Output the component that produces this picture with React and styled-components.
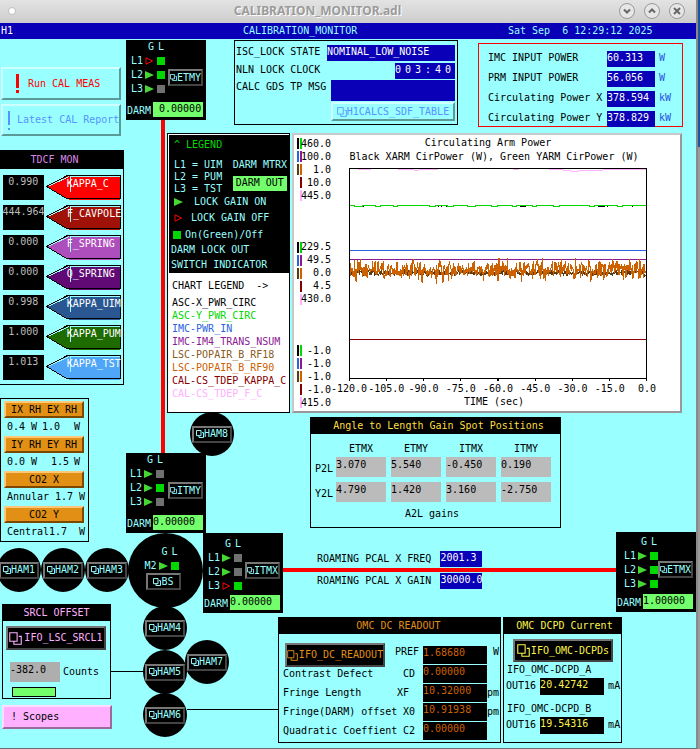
import React from 'react';
import styled, { createGlobalStyle, css } from 'styled-components';

const CYAN = '#99ffff';
const NAVY = '#0a00b8';
const LIME = '#73ff6b';
const GREEN = '#00d800';
const AMBER = '#e19015';

const GlobalStyle = createGlobalStyle`
  * {
    box-sizing: border-box;
  }
  body {
    margin: 0;
    padding-right: 2px;
    background: linear-gradient(#1b559b 147px, #9a9a9a 147px);
    font-family: 'DejaVu Sans Mono', 'Liberation Mono', monospace;
    font-size: 10px;
    line-height: 12px;
    color: #000;
    white-space: pre;
  }
  button, input {
    font: inherit;
    color: inherit;
    margin: 0;
    padding: 0;
    border-radius: 0;
  }
`;

const Window = styled.div`
  border-right: 2px solid #8a8a8a;
  border-bottom: 1px solid #6e6e6e;
  background: ${CYAN};
`;

const TitleBar = styled.header`
  position: relative;
  display: flex;
  align-items: center;
  height: 23px;
  padding: 0 11px 2px 8px;
  background: linear-gradient(#e3e3e3, #cdcdcd);
`;

const WindowTitle = styled.h1`
  flex: 1;
  margin: 0;
  text-align: center;
  font: bold 12px/20px 'Noto Sans', 'Open Sans', sans-serif;
  color: #9b9b9b;
  text-shadow: 1px 1px 0 #fff;
`;

const Dot = styled.span`
  width: 8px;
  height: 8px;
  border: 1px solid #bdbdbd;
  border-radius: 50%;
  background: #fff;
`;

const WindowButtons = styled.div`
  display: flex;
  gap: 9px;
`;

const WindowButton = styled.button`
  display: flex;
  align-items: center;
  justify-content: center;
  width: 16px;
  height: 16px;
  border: 1px solid #989898;
  border-radius: 50%;
  background: #e6e6e6;
`;

const Banner = styled.div`
  display: grid;
  grid-template-columns: 242fr 265fr 188fr;
  align-items: center;
  height: 16px;
  padding-left: 1px;
  background: ${NAVY};
  color: ${CYAN};
`;

const White = styled.span`
  color: #fff;
`;

const Canvas = styled.main`
  position: relative;
  display: flex;
  padding-bottom: 5px;
`;

const LeftColumn = styled.div`
  display: flex;
  flex-direction: column;
  align-items: flex-start;
  width: 124px;
  padding-top: 28px;
`;

const RightColumn = styled.div`
  flex: 1;
  min-width: 0;
  margin-left: 43px;
`;

const raised = css`
  border-style: solid;
  border-width: 2px;
`;

const ShellButton = styled.button`
  ${raised}
  display: flex;
  align-items: center;
  gap: ${(p) => p.$gap || 8}px;
  width: ${(p) => p.$width || 120}px;
  height: ${(p) => p.$height || 33}px;
  margin: 0 0 4px ${(p) => p.$indent || 1}px;
  padding-left: ${(p) => p.$pad || 5}px;
  overflow: hidden;
  background: ${(p) => p.$bg || CYAN};
  border-color: ${(p) => (p.$bg ? '#ffdcff #9a6a9a #9a6a9a #ffdcff' : '#cfffff #5c9999 #5c9999 #cfffff')};
  color: ${(p) => p.$color};
`;

const Panel = styled.section`
  border: 1px solid ${(p) => p.$border || '#000'};
`;

const PanelTitle = styled.h2`
  margin: 0;
  height: ${(p) => p.$height || 16}px;
  background: #000;
  color: ${(p) => p.$color};
  font: inherit;
  line-height: ${(p) => p.$height || 16}px;
  text-align: center;
  text-indent: ${(p) => p.$shift || 0}px;
`;

const TdcfPanel = styled(Panel)`
  width: 124px;
  margin-top: 10px;
  border-left: 0;
`;

const TdcfRows = styled.div`
  display: flex;
  flex-direction: column;
  gap: 5px;
  padding: 6px 2px 4px 3px;
`;

const TdcfRow = styled.div`
  display: flex;
  gap: 2px;
  height: 25px;
`;

const TdcfValue = styled.output`
  display: flex;
  justify-content: center;
  width: 41px;
  height: 25px;
  background: #000;
  color: #bbb;
  line-height: 14px;
`;

const Tag = styled.div`
  position: relative;
  width: 76px;
  height: 25px;
  color: #fff;
`;

const TagShape = styled.svg`
  position: absolute;
  inset: 0;
`;

const TagLabel = styled.span`
  position: relative;
  display: block;
  padding: 3px 0 0 21px;
`;

const HeaterPanel = styled(Panel)`
  width: 89px;
  margin-top: 13px;
  padding: 2px 4px 0 3px;
`;

const HeaterButton = styled.button`
  ${raised}
  display: block;
  width: 80px;
  height: 17px;
  background: ${AMBER};
  border-color: #ffc878 #7a4800 #7a4800 #ffc878;
  line-height: 12px;
`;

const HeaterRow = styled.div`
  display: grid;
  grid-template-columns: ${(p) => p.$columns};
  align-items: center;
  height: 18px;
  padding-left: 3px;
`;

const SrclPanel = styled(Panel)`
  width: 109px;
  margin: 62px 0 6px 2px;
  padding-bottom: 1px;
`;

const SrclBody = styled.div`
  padding: 5px 3px 0;
`;

const SrclRow = styled.label`
  display: flex;
  align-items: center;
  gap: 3px;
  padding: 12px 0 5px 4px;
`;

const Entry = styled.input`
  display: block;
  width: 50px;
  height: 20px;
  padding-bottom: 6px;
  border: 0;
  background: ${(p) => p.$bg || '#bbb'};
`;

const StatusLamp = styled.div`
  width: 44px;
  height: 10px;
  margin-left: 6px;
  border: 1px solid #000;
  background: ${LIME};
`;

const DisplayButton = styled.button`
  ${raised}
  display: flex;
  align-items: center;
  justify-content: center;
  gap: ${(p) => p.$gap || 0}px;
  width: ${(p) => p.$width || 35}px;
  height: ${(p) => p.$height || 17}px;
  background: #000;
  border-color: #777 #444 #444 #777;
  color: ${(p) => p.$color || CYAN};
`;

const TopRow = styled.div`
  display: flex;
  align-items: flex-start;
  gap: 20px;
  padding: 1px 0 6px 67px;
`;

const StatusPanel = styled(Panel)`
  width: 224px;
  height: 85px;
  padding: 4px 2px 0 1px;
`;

const StatusRow = styled.div`
  display: flex;
  justify-content: space-between;
  height: ${(p) => p.$height || 18}px;
  line-height: 14px;
`;

const Readout = styled.output`
  display: block;
  width: ${(p) => p.$width}px;
  height: ${(p) => p.$height || 16}px;
  background: ${(p) => p.$bg || NAVY};
  color: ${(p) => p.$color || '#fff'};
  line-height: 14px;
`;

const Clock = styled(Readout)`
  display: flex;
  justify-content: space-between;
  padding-right: 4px;
`;

const SdfButton = styled(DisplayButton)`
  margin: 1px 0 0 auto;
  background: ${CYAN};
  border-color: #cfffff #5c9999 #5c9999 #cfffff;
`;

const PowerPanel = styled(Panel)`
  width: 205px;
  height: 84px;
  margin-top: 3px;
  padding: 7px 0 0 9px;
`;

const PowerRow = styled.div`
  display: grid;
  grid-template-columns: 119px 52px 1fr;
  height: 20px;
  line-height: 14px;
`;

const Unit = styled.span`
  color: #2a50e0;
`;

const ChartRow = styled.div`
  display: flex;
  gap: 2px;
  margin-right: 14px;
`;

const Legend = styled.section`
  display: flex;
  flex-direction: column;
  width: 123px;
  border: 1px solid #000;
  background: #fff;
`;

const LegendKey = styled.div`
  margin: 1px 0 0 1px;
  padding: 3px 1px 0 2px;
  background: #000;
  color: ${CYAN};
`;

const LegendLine = styled.div`
  display: flex;
  align-items: center;
  gap: ${(p) => p.$gap || 0}px;
  height: ${(p) => p.$height || 14}px;
  padding-left: ${(p) => p.$indent || 0}px;
  color: ${(p) => p.$color};
`;

const LegendMatrix = styled.div`
  display: flex;
  justify-content: space-between;
  padding: 7px 1px 0 3px;
`;

const DarmOut = styled.div`
  width: 54px;
  height: 15px;
  margin-top: 5px;
  background: ${LIME};
  color: #000;
  text-align: center;
  line-height: 14px;
`;

const LegendSeries = styled.div`
  padding: 3px 0 0 4px;
`;

const Chart = styled.section`
  flex: 1;
  display: flex;
  min-width: 0;
  height: 280px;
  padding: 2px 2px 2px 3px;
  background: #fff;
  border: 2px solid;
  border-color: #c8c8c8 #989898 #989898 #c8c8c8;
`;

const ScaleColumn = styled.div`
  display: flex;
  flex-direction: column;
  justify-content: space-between;
  width: 34px;
`;

const ScaleRow = styled.div`
  display: flex;
  align-items: center;
  height: 13px;
`;

const ScaleMark = styled.i`
  width: 2px;
  height: 11px;
  margin-right: 1px;
  background: ${(p) => p.$color};
`;

const ScaleText = styled.span`
  flex: 1;
  margin-left: -4px;
  text-align: right;
`;

const PlotColumn = styled.div`
  flex: 1;
  min-width: 0;
  padding-right: 13px;
`;

const PlotTitle = styled.div`
  height: 14px;
  padding-right: ${(p) => p.$shift || 0}px;
  text-align: center;
`;

const PlotArea = styled.svg`
  display: block;
  width: calc(100% - 36px);
  height: 214px;
  margin: 3px 18px 0;
`;

const TickRow = styled.div`
  display: flex;
  justify-content: space-between;
  padding: 1px 0;
`;

const TickLabel = styled.span`
  width: 36px;
  text-align: center;
`;

const GainPanel = styled(Panel)`
  width: 251px;
  height: 111px;
  margin: 4px 0 23px 143px;
`;

const GainTable = styled.table`
  margin: 9px 0 0 1px;
  border-collapse: collapse;

  th {
    font-weight: normal;
    padding: 0 3px 2px;
  }
  thead th {
    padding-right: 8px;
  }
  td {
    padding: 0 5px 5px 0;
  }
`;

const GainCaption = styled.div`
  margin-top: 1px;
  padding-right: 7px;
  text-align: center;
`;

const PcalRow = styled.div`
  display: flex;
  gap: 9px;
  height: 16px;
  margin: 0 0 6px 150px;
  line-height: 16px;
`;

const BottomRow = styled.div`
  display: flex;
  gap: 2px;
  margin: 28px 0 0 111px;
`;

const OmcPanel = styled(Panel)`
  width: 223px;
  height: 126px;
`;

const OmcGrid = styled.div`
  display: grid;
  grid-template-columns: 108px 32px 64px 1fr;
  grid-template-rows: 21px repeat(4, 18px);
  row-gap: 1px;
  margin: 9px 0 0 4px;
  line-height: 18px;

  > button {
    margin-left: 2px;
    line-height: 12px;
  }
  > output {
    align-self: end;
  }
`;

const Right = styled.span`
  padding-right: ${(p) => p.$pad || 0}px;
  text-align: right;
`;

const DcpdPanel = styled(Panel)`
  width: 119px;
  height: 126px;

  > button {
    margin: 5px auto 2px 9px;
  }
`;

const DcpdLabel = styled.div`
  padding: 0 0 2px 3px;
`;

const DcpdRow = styled.div`
  display: flex;
  gap: 4px;
  margin: 0 0 8px 2px;
  line-height: 15px;
`;

/* beam path: lines, optics and chambers placed on the canvas */
const Beam = styled.div`
  position: absolute;
  left: ${(p) => p.$x}px;
  top: ${(p) => p.$y}px;
  ${(p) => (p.$right ? `right: ${p.$right}px;` : `width: ${p.$w}px;`)}
  height: ${(p) => p.$h}px;
  background: ${(p) => p.$color || '#f00'};
`;

const OpticBox = styled.div`
  position: absolute;
  top: ${(p) => p.$y}px;
  ${(p) => (p.$x === undefined ? 'right: 0;' : `left: ${p.$x}px;`)}
  display: flex;
  flex-direction: column;
  justify-content: space-between;
  width: 80px;
  height: 80px;
  padding: ${(p) => p.$drop || 0}px 3px 3px 1px;
  background: #000;
  color: ${CYAN};
`;

const OpticTop = styled.div`
  display: flex;
  justify-content: space-between;
  padding-left: ${(p) => p.$indent}px;

  > button {
    margin-top: ${(p) => p.$offset}px;
  }
`;

const Ports = styled.div`
  display: grid;
  grid-template-columns: 14px 12px 8px;
  grid-auto-rows: 14px;
  align-items: center;
`;

const PortHead = styled.span`
  text-align: center;
`;

const Square = styled.i`
  width: 8px;
  height: 8px;
  background: ${(p) => (p.$on ? GREEN : '#707070')};
`;

const DarmRow = styled.div`
  display: flex;
  justify-content: space-between;
  align-items: flex-end;
`;

const Chamber = styled.div`
  position: absolute;
  left: ${(p) => p.$x}px;
  top: ${(p) => p.$y}px;
  display: flex;
  flex-direction: column;
  align-items: center;
  justify-content: center;
  width: 44px;
  height: 44px;
  border-radius: 50%;
  background: #000;
  color: ${CYAN};
`;

const Splitter = styled(Chamber)`
  width: 75px;
  height: 75px;
  padding: 0 4px 6px 0;

  > ${Ports} {
    margin-right: 4px;
  }
`;

const PagesIcon = ({ size = 8 }) => (
  <svg width={size} height={size} viewBox="0 0 12 12" fill="none" stroke="currentColor" strokeWidth={size > 8 ? 1 : 1.5} style={{ flex: 'none' }}>
    <path d="M0.7 0.7H7.5V8.5H0.7ZM9 4H11.3V11.3H4.5V8.5" />
  </svg>
);

const Arrow = ({ open }) => (
  <svg width="9" height="8" viewBox="0 0 9 8">
    {open ? (
      <path d="M1 0.8L7.5 4L1 7.2Z" fill="none" stroke="#f00" />
    ) : (
      <path d="M0 0L9 4L0 8Z" fill="#46d832" />
    )}
  </svg>
);

const Bang = ({ bold }) => (
  <svg width={bold ? 4 : 3} height="19" viewBox={bold ? '0 0 4 19' : '0 0 3 19'} fill="currentColor" style={{ flex: 'none' }}>
    {bold ? <path d="M0 0H3V14H0ZM0 16H3V19H0Z" /> : <path d="M0 0H2V14H0ZM0 17H2V19H0Z" />}
  </svg>
);

const TDCF = [
  ['0.990', 'KAPPA_C', '#ff0000'],
  ['444.964', 'F_CAVPOLE', '#a01208'],
  ['0.000', 'F_SPRING', '#ae4ebc'],
  ['0.000', 'Q_SPRING', '#610a75'],
  ['0.998', 'KAPPA_UIM', '#2a5791'],
  ['1.000', 'KAPPA_PUM', '#1e6b00'],
  ['1.013', 'KAPPA_TST', '#4fa5f8'],
];

const HEATERS = [
  ['IX RH EX RH', ['0.4', 'W', '1.0', 'W'], '24px 11px 32px 1fr'],
  ['IY RH EY RH', ['0.0', 'W', '1.5', 'W'], '24px 20px 23px 1fr'],
  ['CO2 X', ['Annular', '1.7', 'W'], '48px 24px 1fr'],
  ['CO2 Y', ['Central', '1.7', 'W'], '42px 30px 1fr'],
];

const POWERS = [
  ['IMC INPUT POWER', '60.313', 'W'],
  ['PRM INPUT POWER', '56.056', 'W'],
  ['Circulating Power X', '378.594', 'kW'],
  ['Circulating Power Y', '378.829', 'kW'],
];

const SERIES = [
  ['ASC-X_PWR_CIRC', '#000'],
  ['ASC-Y_PWR_CIRC', '#00d800'],
  ['IMC-PWR_IN', '#2a63e4'],
  ['IMC-IM4_TRANS_NSUM', '#8b1a96'],
  ['LSC-POPAIR_B_RF18', '#8a5a20'],
  ['LSC-POPAIR_B_RF90', '#cd6100'],
  ['CAL-CS_TDEP_KAPPA_C', '#870000'],
  ['CAL-CS_TDEP_F_C', '#ffb0ff'],
];

const MARKS = [
  ['#000', '#00d800'],
  ['#2a63e4', '#8b1a96'],
  ['#5e3a10', '#cd6100'],
  ['transparent', '#870000'],
  ['transparent', '#ffb0ff'],
];

const SCALES = [
  ['460.0', '100.0', '1.0', '10.0', '445.0'],
  ['229.5', '49.5', '0.0', '4.5', '430.0'],
  ['-1.0', '-1.0', '-1.0', '-1.0', '415.0'],
];

const TICKS = ['-120.0', '-105.0', '-90.0', '-75.0', '-60.0', '-45.0', '-30.0', '-15.0', '0.0'];

const MIRRORS = ['ETMX', 'ETMY', 'ITMX', 'ITMY'];

const GAINS = [
  ['P2L', '3.070', '5.540', '-0.450', '0.190'],
  ['Y2L', '4.790', '1.420', '3.160', '-2.750'],
];

const OMC = [
  ['Contrast Defect', 'CD', '0.00000', ''],
  ['Fringe Length', 'XF', '10.32000', 'pm'],
  ['Fringe(DARM) offset', 'X0', '10.91938', 'pm'],
  ['Quadratic Coeffient', 'C2', '0.00000', ''],
];

const OPTICS = [
  { name: 'ETMY', x: 126, y: 1, gains: [0, 1, 1], locks: [1, 1, 0], darm: ' 0.00000' },
  { name: 'ITMY', x: 126, y: 414, indent: 3, gains: [1, 1, 1], locks: [0, 1, 0], darm: '0.00000' },
  { name: 'ITMX', x: 203, y: 494, drop: 4, gains: [1, 1, 0], locks: [0, 0, 1], darm: '0.00000' },
  { name: 'ETMX', y: 493, drop: 3, indent: 7, gains: [1, 1, 1], locks: [1, 1, 1], darm: '1.00000' },
];

const CHAMBERS = [
  ['HAM1', -3, 509],
  ['HAM2', 41, 509],
  ['HAM3', 85, 509],
  ['HAM8', 190, 373],
  ['HAM4', 143, 567],
  ['HAM5', 143, 611],
  ['HAM6', 143, 654],
  ['HAM7', 185, 601],
];

const noise = (seed, center, spread) => {
  let s = seed;
  const next = () => {
    s = (s * 48271) % 2147483647;
    return s / 2147483647;
  };
  const points = [];
  for (let x = 1; x < 296; x += 0.5) {
    const y = center + (next() + next() + next() - 1.5) * spread;
    points.push(`${x},${y.toFixed(1)}`);
  }
  return points.join(' ');
};

const Plot = () => (
  <PlotArea viewBox="0 0 297 214" preserveAspectRatio="none" shapeRendering="crispEdges" fill="none">
    <path d="M9 1.5H22M49 1.5H65M65 2.5H70M70 1.5H89M163 1.5H169M199 1.5H213M213 2.5H221M221 3.5H229M229 2.5H253M253 1.5H296" stroke="#ffb0ff" />
    <path d="M14 38.5H15M44 38.5H46M81 38.5H84M89 38.5H90M92 38.5H93M97 38.5H98M163 38.5H167M170 38.5H176M204 38.5H205M248 38.5H255M257 38.5H258M282 38.5H283" stroke="#000" />
    <path d="M1 37.5H5V38.5H13V37.5H26V38.5H31V37.5H44V38.5H48V37.5H80V38.5H86V37.5H98V38.5H104V37.5H118V38.5H126V37.5H142V38.5H148V37.5H163V38.5H167V37.5H183V38.5H187V37.5H204V38.5H210V37.5H240V38.5H245V37.5H268V38.5H273V37.5H296" stroke="#00d800" />
    <path d="M1 82.5H296" stroke="#2a63e4" />
    <path d="M1 91.5H296" stroke="#8b1a96" />
    <polyline points={noise(7, 105, 3)} stroke="#5e3a10" />
    <polyline points={noise(42, 102, 10)} stroke="#cd6100" />
    <path d="M1 171.5H296" stroke="#870000" />
    <path d="M0.5 0.5H296.5V210.5H0.5Z" stroke="#000" />
    {TICKS.map((t, i) => (
      <path key={t} d={`M${i * 37 + 0.5} 210V213`} stroke="#000" />
    ))}
  </PlotArea>
);

const Optic = ({ name, x, y, drop = 0, indent = 4, gains, locks, darm }) => (
  <OpticBox $x={x} $y={y} $drop={drop}>
    <OpticTop $offset={29 - drop} $indent={indent}>
      <Ports>
        <span />
        <PortHead>G</PortHead>
        <PortHead>L</PortHead>
        {gains.map((g, i) => (
          <React.Fragment key={i}>
            <span>L{i + 1}</span>
            <Arrow open={!g} />
            <Square $on={locks[i]} />
          </React.Fragment>
        ))}
      </Ports>
      <DisplayButton>
        <PagesIcon size={7} />
        {name}
      </DisplayButton>
    </OpticTop>
    <DarmRow>
      <span>DARM</span>
      <Readout $width={50} $height={15} $bg={LIME} $color="#000">{darm}</Readout>
    </DarmRow>
  </OpticBox>
);

const App = () => (
  <>
    <GlobalStyle />
    <Window>
      <TitleBar>
        <Dot />
        <WindowTitle>CALIBRATION_MONITOR.adl</WindowTitle>
        <WindowButtons>
          {['M1 2.5L4 5.5L7 2.5', 'M1 5.5L4 2.5L7 5.5', 'M1 1L7 7M7 1L1 7'].map((d, i) => (
            <WindowButton key={d} aria-label={['Minimize', 'Maximize', 'Close'][i]}>
              <svg width="8" height="8" viewBox="0 0 8 8" fill="none" stroke="#666" strokeWidth="2" style={{ flex: 'none' }}>
                <path d={d} />
              </svg>
            </WindowButton>
          ))}
        </WindowButtons>
      </TitleBar>
      <Banner>
        <White>H1</White>
        <span>CALIBRATION_MONITOR</span>
        <span>Sat Sep  6 12:29:12 2025</span>
      </Banner>

      <Canvas>
        <LeftColumn>
          <ShellButton $color="#f00" $pad={13} $gap={8}>
            <Bang bold />
            Run CAL MEAS
          </ShellButton>
          <ShellButton $color="#5893ff" $pad={5} $gap={6} $height={32}>
            <Bang />
            Latest CAL Report
          </ShellButton>

          <TdcfPanel>
            <PanelTitle $height={18} $color="#d687e6" $shift={-14}>TDCF MON</PanelTitle>
            <TdcfRows>
              {TDCF.map(([value, name, color]) => (
                <TdcfRow key={name}>
                  <TdcfValue>{value}</TdcfValue>
                  <Tag>
                    <TagShape width="76" height="25" viewBox="0 0 76 25" shapeRendering="crispEdges">
                      <path d="M1 12L22 1H74V25H24L21 23Z" fill={color} />
                      <path d="M0.5 11.5L21.5 0.5H74.5V23.5H20.5Z" fill="none" stroke="#000" />
                      <path d="M24.5 17V1.5H74M3 11L23 1.5" fill="none" stroke={CYAN} />
                    </TagShape>
                    <TagLabel>{name}</TagLabel>
                  </Tag>
                </TdcfRow>
              ))}
            </TdcfRows>
          </TdcfPanel>

          <HeaterPanel>
            {HEATERS.map(([name, cells, columns]) => (
              <React.Fragment key={name}>
                <HeaterButton>{name}</HeaterButton>
                <HeaterRow $columns={columns}>
                  {cells.map((cell, i) => (
                    <span key={i}>{cell}</span>
                  ))}
                </HeaterRow>
              </React.Fragment>
            ))}
          </HeaterPanel>

          <SrclPanel>
            <PanelTitle $color="#ffb0ff">SRCL OFFSET</PanelTitle>
            <SrclBody>
              <DisplayButton $width={100} $height={24} $gap={2} $color="#ffb0ff">
                <PagesIcon size={13} />
                IFO_LSC_SRCL1
              </DisplayButton>
              <SrclRow>
                <Entry $bg="#aeaeae" defaultValue="-382.0" />
                Counts
              </SrclRow>
              <StatusLamp />
            </SrclBody>
          </SrclPanel>
          <ShellButton $bg="#ffb0ff" $width={110} $height={24} $indent={2} $pad={7}>! Scopes</ShellButton>
        </LeftColumn>

        <RightColumn>
          <TopRow>
            <StatusPanel>
              <StatusRow>
                <span>ISC_LOCK STATE</span>
                <Readout $width={128}>NOMINAL_LOW_NOISE</Readout>
              </StatusRow>
              <StatusRow $height={17}>
                <span>NLN LOCK CLOCK</span>
                <Clock $width={60}>
                  {'003:40'.split('').map((c, i) => (
                    <span key={i}>{c}</span>
                  ))}
                </Clock>
              </StatusRow>
              <StatusRow $height={21}>
                <span>CALC GDS TP MSG</span>
                <Readout $width={124} $height={21} />
              </StatusRow>
              <SdfButton $width={124} $height={19} $color="#5893ff">
                <PagesIcon size={10} />
                H1CALCS_SDF_TABLE
              </SdfButton>
            </StatusPanel>

            <PowerPanel $border="#f00">
              {POWERS.map(([label, value, unit]) => (
                <PowerRow key={label}>
                  <span>{label}</span>
                  <Readout $width={48}>{value}</Readout>
                  <Unit>{unit}</Unit>
                </PowerRow>
              ))}
            </PowerPanel>
          </TopRow>

          <ChartRow>
            <Legend>
              <LegendKey>
                <LegendLine $indent={3} $color={GREEN}>^ LEGEND</LegendLine>
                <LegendMatrix>
                  <div>
                    <div>L1 = UIM</div>
                    <div>L2 = PUM</div>
                    <div>L3 = TST</div>
                  </div>
                  <div>
                    <div>DARM MTRX</div>
                    <DarmOut>DARM OUT</DarmOut>
                  </div>
                </LegendMatrix>
                <LegendLine $indent={3} $gap={11}>
                  <Arrow />
                  LOCK GAIN ON
                </LegendLine>
                <LegendLine $indent={3} $gap={8} $height={17}>
                  <Arrow open />
                  LOCK GAIN OFF
                </LegendLine>
                <LegendLine $indent={2} $gap={4} $height={18}>
                  <Square $on />
                  On(Green)/Off
                </LegendLine>
                <LegendLine $height={12}>DARM LOCK OUT</LegendLine>
                <LegendLine $height={17}>SWITCH INDICATOR</LegendLine>
              </LegendKey>
              <LegendSeries>
                <LegendLine $height={20}>CHART LEGEND  -&gt;</LegendLine>
                {SERIES.map(([name, color]) => (
                  <LegendLine key={name} $height={13} $color={color}>{name}</LegendLine>
                ))}
              </LegendSeries>
            </Legend>

            <Chart>
              <ScaleColumn>
                {SCALES.map((group, g) => (
                  <div key={g}>
                    {group.map((value, i) => (
                      <ScaleRow key={i}>
                        <ScaleMark $color={MARKS[i][0]} />
                        <ScaleMark $color={MARKS[i][1]} />
                        <ScaleText>{value}</ScaleText>
                      </ScaleRow>
                    ))}
                  </div>
                ))}
              </ScaleColumn>
              <PlotColumn>
                <PlotTitle $shift={20}>Circulating Arm Power</PlotTitle>
                <PlotTitle $shift={8}>Black XARM CirPower (W), Green YARM CirPower (W)</PlotTitle>
                <Plot />
                <TickRow>
                  {TICKS.map((t) => (
                    <TickLabel key={t}>{t}</TickLabel>
                  ))}
                </TickRow>
                <PlotTitle $shift={8}>TIME (sec)</PlotTitle>
              </PlotColumn>
            </Chart>
          </ChartRow>

          <GainPanel>
            <PanelTitle $color="#ffdf3c" $shift={6}>Angle to Length Gain Spot Positions</PanelTitle>
            <GainTable>
              <thead>
                <tr>
                  <td />
                  {MIRRORS.map((mirror) => (
                    <th key={mirror} scope="col">{mirror}</th>
                  ))}
                </tr>
              </thead>
              <tbody>
                {GAINS.map(([name, ...values]) => (
                  <tr key={name}>
                    <th scope="row">{name}</th>
                    {values.map((v, i) => (
                      <td key={MIRRORS[i]}>
                        <Entry defaultValue={v} aria-label={`${name} ${MIRRORS[i]}`} />
                      </td>
                    ))}
                  </tr>
                ))}
              </tbody>
            </GainTable>
            <GainCaption>A2L gains</GainCaption>
          </GainPanel>

          <PcalRow>
            <span>ROAMING PCAL X FREQ</span>
            <Readout $width={42}>2001.3</Readout>
          </PcalRow>
          <PcalRow>
            <span>ROAMING PCAL X GAIN</span>
            <Readout $width={42}>30000.0</Readout>
          </PcalRow>

          <BottomRow>
            <OmcPanel>
              <PanelTitle $color={AMBER} $shift={18}>OMC DC READOUT</PanelTitle>
              <OmcGrid>
                <DisplayButton $width={100} $height={24} $gap={1} $color={AMBER}>
                  <PagesIcon size={11} />
                  IFO_DC_READOUT
                </DisplayButton>
                <Right $pad={4}>PREF</Right>
                <Readout $width={64} $height={18} $bg="#000" $color="#cd6100">1.68680</Readout>
                <span> W</span>
                {OMC.map(([label, symbol, value, unit]) => (
                  <React.Fragment key={symbol}>
                    <span>{label}</span>
                    <Right $pad={symbol === 'XF' ? 14 : 8}>{symbol}</Right>
                    <Readout $width={64} $height={18} $bg="#000" $color="#cd6100">{value}</Readout>
                    <span>{unit}</span>
                  </React.Fragment>
                ))}
              </OmcGrid>
            </OmcPanel>

            <DcpdPanel>
              <PanelTitle $color="#fbf34a" $shift={4}>OMC DCPD Current</PanelTitle>
              <DisplayButton $width={100} $height={23} $color="#fbf34a" $gap={1}>
                <PagesIcon size={13} />
                IFO_OMC-DCPDs
              </DisplayButton>
              {[['A', '20.42742'], ['B', '19.54316']].map(([id, value]) => (
                <React.Fragment key={id}>
                  <DcpdLabel>IFO_OMC-DCPD_{id}</DcpdLabel>
                  <DcpdRow>
                    <span>OUT16</span>
                    <Readout $width={64} $height={17} $bg="#000" $color="#fbf34a">{value}</Readout>
                    <span>mA</span>
                  </DcpdRow>
                </React.Fragment>
              ))}
            </DcpdPanel>
          </BottomRow>
        </RightColumn>

        <Beam $x={161} $y={81} $w={4} $h={333} />
        <Beam $x={283} $y={529} $right={80} $h={4} />
        <Beam $x={111} $y={632} $w={32} $h={1} $color="#000" />
        <Beam $x={187} $y={670} $w={91} $h={1} $color="#000" />

        {CHAMBERS.map(([name, x, y]) => (
          <Chamber key={name} $x={x} $y={y}>
            <DisplayButton $width={40}>
              <PagesIcon />
              {name}
            </DisplayButton>
          </Chamber>
        ))}
        <Splitter $x={128} $y={494}>
          <Ports>
            <span />
            <PortHead>G</PortHead>
            <PortHead>L</PortHead>
            <span>M2</span>
            <Arrow />
            <Square $on />
          </Ports>
          <DisplayButton>
            <PagesIcon />
            BS
          </DisplayButton>
        </Splitter>
        {OPTICS.map((optic) => (
          <Optic key={optic.name} {...optic} />
        ))}
      </Canvas>
    </Window>
  </>
);

export default App;
